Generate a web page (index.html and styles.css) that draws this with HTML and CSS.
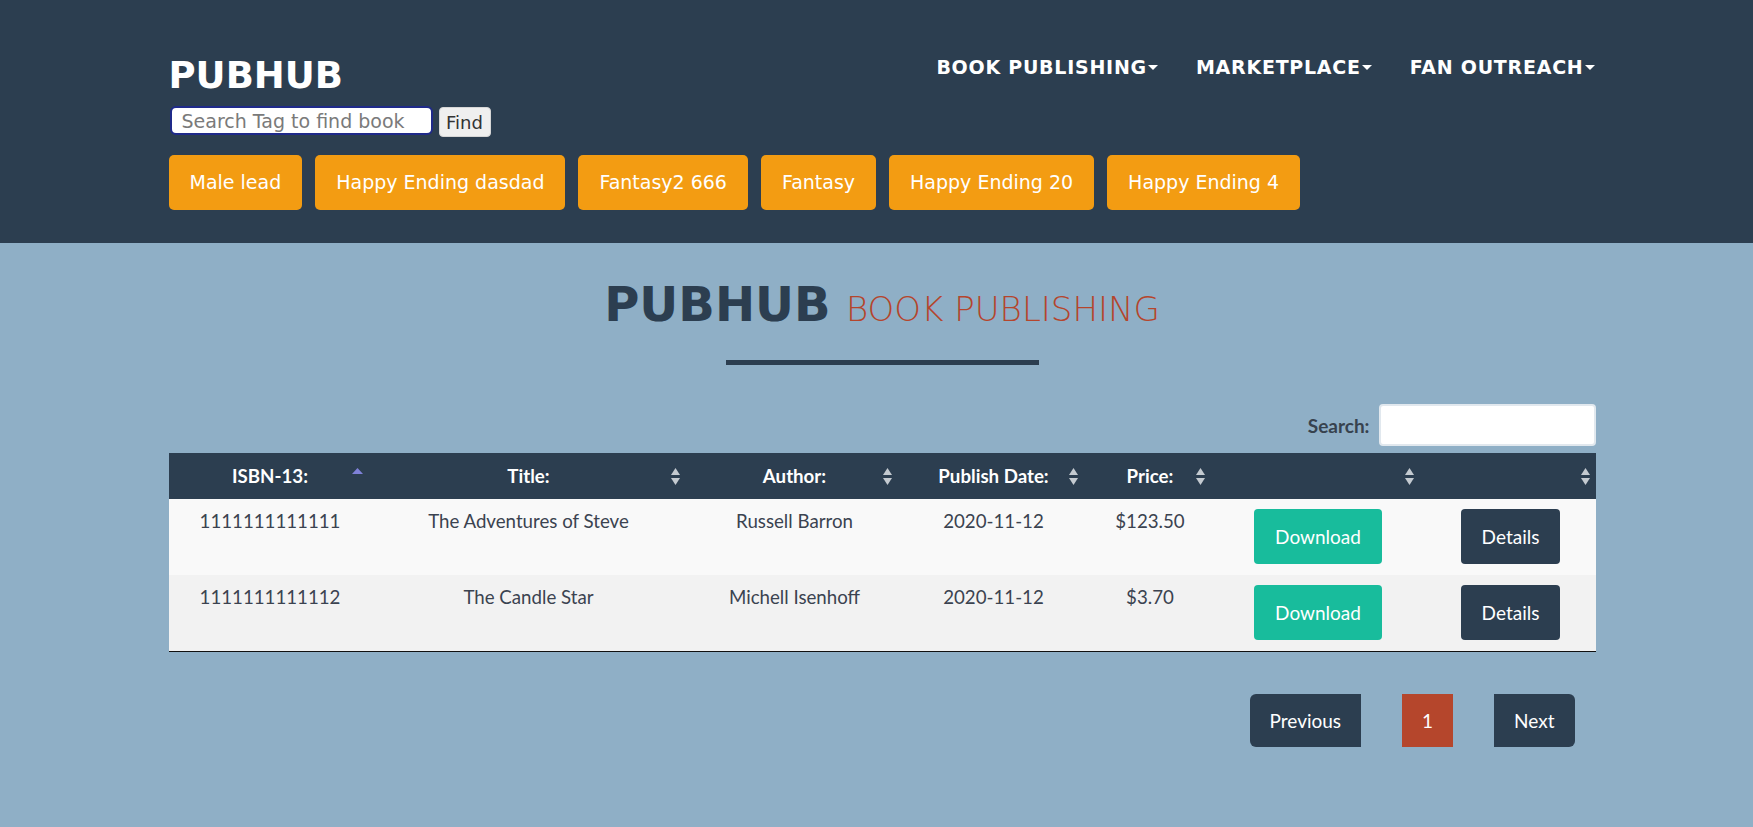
FILE: index.html
```html
<!DOCTYPE html>
<html lang="en">
<head>
<meta charset="utf-8">
<title>PubHub - Book Publishing</title>
<link rel="stylesheet" href="styles.css">
</head>
<body>
<header class="site-header">
  <div class="container">
    <div class="top-row">
      <div class="brand-col">
        <div class="brand">PUBHUB</div>
        <form class="tag-search">
          <input class="tag-input" type="text" placeholder="Search Tag to find book">
          <button class="find-btn" type="button">Find</button>
        </form>
      </div>
      <nav class="main-nav">
        <a class="nav-link" href="#">BOOK PUBLISHING<span class="caret"></span></a>
        <a class="nav-link" href="#">MARKETPLACE<span class="caret"></span></a>
        <a class="nav-link" href="#">FAN OUTREACH<span class="caret"></span></a>
      </nav>
    </div>
    <div class="tags">
      <a class="tag" href="#">Male lead</a>
      <a class="tag" href="#">Happy Ending dasdad</a>
      <a class="tag" href="#">Fantasy2 666</a>
      <a class="tag" href="#">Fantasy</a>
      <a class="tag" href="#">Happy Ending 20</a>
      <a class="tag" href="#">Happy Ending 4</a>
    </div>
  </div>
</header>

<main class="page">
  <div class="container">
    <h2 class="page-title"><span class="title-strong">PUBHUB</span> <span class="title-light">BOOK PUBLISHING</span></h2>
    <hr class="title-rule">

    <div class="table-filter">
      <label class="filter-label" for="flt">Search:</label>
      <input class="filter-input" id="flt" type="search">
    </div>

    <table class="books">
      <colgroup>
        <col class="c1"><col class="c2"><col class="c3"><col class="c4"><col class="c5"><col class="c6"><col class="c7">
      </colgroup>
      <thead>
        <tr>
          <th>ISBN-13:<svg class="sort sort-asc" viewBox="0 0 11 6"><polygon points="0,6 5.5,0 11,6"/></svg></th>
          <th>Title:<svg class="sort" viewBox="0 0 9 17"><polygon points="0,7 4.5,0 9,7"/><polygon points="0,10 4.5,17 9,10"/></svg></th>
          <th>Author:<svg class="sort" viewBox="0 0 9 17"><polygon points="0,7 4.5,0 9,7"/><polygon points="0,10 4.5,17 9,10"/></svg></th>
          <th>Publish Date:<svg class="sort" viewBox="0 0 9 17"><polygon points="0,7 4.5,0 9,7"/><polygon points="0,10 4.5,17 9,10"/></svg></th>
          <th>Price:<svg class="sort" viewBox="0 0 9 17"><polygon points="0,7 4.5,0 9,7"/><polygon points="0,10 4.5,17 9,10"/></svg></th>
          <th><svg class="sort" viewBox="0 0 9 17"><polygon points="0,7 4.5,0 9,7"/><polygon points="0,10 4.5,17 9,10"/></svg></th>
          <th><svg class="sort" viewBox="0 0 9 17"><polygon points="0,7 4.5,0 9,7"/><polygon points="0,10 4.5,17 9,10"/></svg></th>
        </tr>
      </thead>
      <tbody>
        <tr>
          <td>1111111111111</td>
          <td>The Adventures of Steve</td>
          <td>Russell Barron</td>
          <td>2020-11-12</td>
          <td>$123.50</td>
          <td><a class="btn btn-success" href="#">Download</a></td>
          <td><a class="btn btn-primary" href="#">Details</a></td>
        </tr>
        <tr>
          <td>1111111111112</td>
          <td>The Candle Star</td>
          <td>Michell Isenhoff</td>
          <td>2020-11-12</td>
          <td>$3.70</td>
          <td><a class="btn btn-success" href="#">Download</a></td>
          <td><a class="btn btn-primary" href="#">Details</a></td>
        </tr>
      </tbody>
    </table>

    <div class="pager">
      <a class="page-btn page-prev" href="#">Previous</a>
      <a class="page-btn page-current" href="#">1</a>
      <a class="page-btn page-next" href="#">Next</a>
    </div>
  </div>
</main>
</body>
</html>
```

FILE: styles.css
```css
* { box-sizing: border-box; }

body {
  margin: 0;
  font-family: "DejaVu Sans", sans-serif;
  background: #8fafc6;
}

.container {
  width: 1427px;
  margin-left: calc(50% - 708px);
}

/* ---------- header ---------- */
.site-header {
  background: #2c3e50;
  padding: 56px 0 33px;
}

.top-row {
  display: flex;
  justify-content: space-between;
  align-items: flex-start;
}

.brand {
  font-weight: bold;
  font-size: 37px;
  line-height: 40px;
  color: #fff;
}

.tag-search {
  display: flex;
  align-items: flex-start;
  gap: 6px;
  margin: 10px 0 0 1px;
}

.tag-input {
  width: 263px;
  height: 29px;
  border: 2px solid #1f2a8a;
  border-radius: 6px;
  padding: 0 10px;
  font: 19px "DejaVu Sans", sans-serif;
  color: #555;
  background: #fff;
  outline: none;
}

.tag-input::placeholder { color: #7a7a7a; }

.find-btn {
  margin-top: 1px;
  height: 30px;
  width: 52px;
  padding: 0;
  background: #efefef;
  border: 1px solid #d6d6d6;
  border-radius: 4px;
  font: 18px "DejaVu Sans", sans-serif;
  color: #333;
}

.main-nav {
  display: flex;
  gap: 38px;
  margin-right: 1px;
}

.nav-link {
  display: flex;
  align-items: center;
  color: #fff;
  font-weight: bold;
  font-size: 19px;
  letter-spacing: 0.75px;
  line-height: 22px;
  text-decoration: none;
}

.caret {
  width: 0;
  height: 0;
  margin-left: 1px;
  border-top: 5px solid #fff;
  border-left: 5px solid transparent;
  border-right: 5px solid transparent;
}

.tags {
  display: flex;
  gap: 13px;
  margin-top: 18px;
}

.tag {
  display: block;
  height: 55px;
  line-height: 55px;
  padding: 0 21px;
  border-radius: 5px;
  background: #f39c12;
  color: #fff;
  font-size: 19px;
  text-decoration: none;
}

/* ---------- main ---------- */
.page {
  padding: 33px 0 80px;
}

.page-title {
  margin: 0;
  text-align: center;
  font-size: 48px;
  line-height: 56px;
  font-weight: normal;
}

.title-strong {
  font-weight: bold;
  color: #2c3e50;
}

.title-light {
  font-size: 34px;
  line-height: 1;
  font-weight: 200;
  color: #b5452c;
}

.title-rule {
  width: 313px;
  height: 5px;
  margin: 28px auto 0;
  border: 0;
  background: #2c3e50;
}

.table-filter {
  display: flex;
  justify-content: flex-end;
  align-items: center;
  gap: 9px;
  margin-top: 39px;
  font-family: Lato, sans-serif;
}

.filter-label {
  font-size: 19px;
  font-weight: bold;
  color: #37424e;
}

.filter-input {
  width: 217px;
  height: 42px;
  border: 2px solid #e1e8ee;
  border-radius: 4px;
  background: #fff;
  outline: none;
}

/* ---------- table ---------- */
.books {
  width: 1427px;
  margin-top: 7px;
  border-collapse: collapse;
  table-layout: fixed;
  font-family: Lato, sans-serif;
}

.c1 { width: 197px; }
.c2 { width: 320px; }
.c3 { width: 212px; }
.c4 { width: 186px; }
.c5 { width: 127px; }
.c6 { width: 209px; }
.c7 { width: 176px; }

.books th {
  position: relative;
  height: 46px;
  padding: 0 10px 0 16px;
  background: #2c3e50;
  color: #fff;
  font-size: 18.7px;
  font-weight: bold;
  text-align: center;
}

.sort {
  position: absolute;
  top: 50%;
  right: 6px;
  width: 9px;
  height: 17px;
  margin-top: -8px;
  fill: #c4cad0;
}

.sort-asc {
  right: 3px;
  width: 11px;
  height: 6px;
  margin-top: -8px;
  fill: #7f81d8;
}

.books td {
  padding: 10px 10px 11px 16px;
  vertical-align: top;
  text-align: center;
  font-size: 18.7px;
  line-height: 25px;
  color: #3b4350;
}

.books tbody tr:nth-child(odd) { background: #f9f9f9; }
.books tbody tr:nth-child(even) { background: #f2f2f2; }
.books tbody tr:last-child { border-bottom: 1px solid #111; }

.btn {
  display: inline-block;
  vertical-align: top;
  height: 55px;
  line-height: 55px;
  padding: 0 21px;
  border-radius: 4px;
  color: #fff;
  font-size: 19px;
  text-decoration: none;
}

.btn-success { background: #18bc9c; }
.btn-primary { background: #2c3e50; }

/* ---------- pagination ---------- */
.pager {
  display: flex;
  justify-content: flex-end;
  gap: 41px;
  margin: 42px 21px 0 0;
  font-family: Lato, sans-serif;
}

.page-btn {
  display: block;
  height: 53px;
  line-height: 53px;
  padding: 0 20px;
  color: #fff;
  font-size: 19px;
  text-decoration: none;
  background: #2c3e50;
}

.page-prev { border-radius: 6px 0 0 6px; }
.page-next { border-radius: 0 6px 6px 0; }

.page-current {
  width: 51px;
  padding: 0;
  text-align: center;
  background: #b5462c;
}
```
